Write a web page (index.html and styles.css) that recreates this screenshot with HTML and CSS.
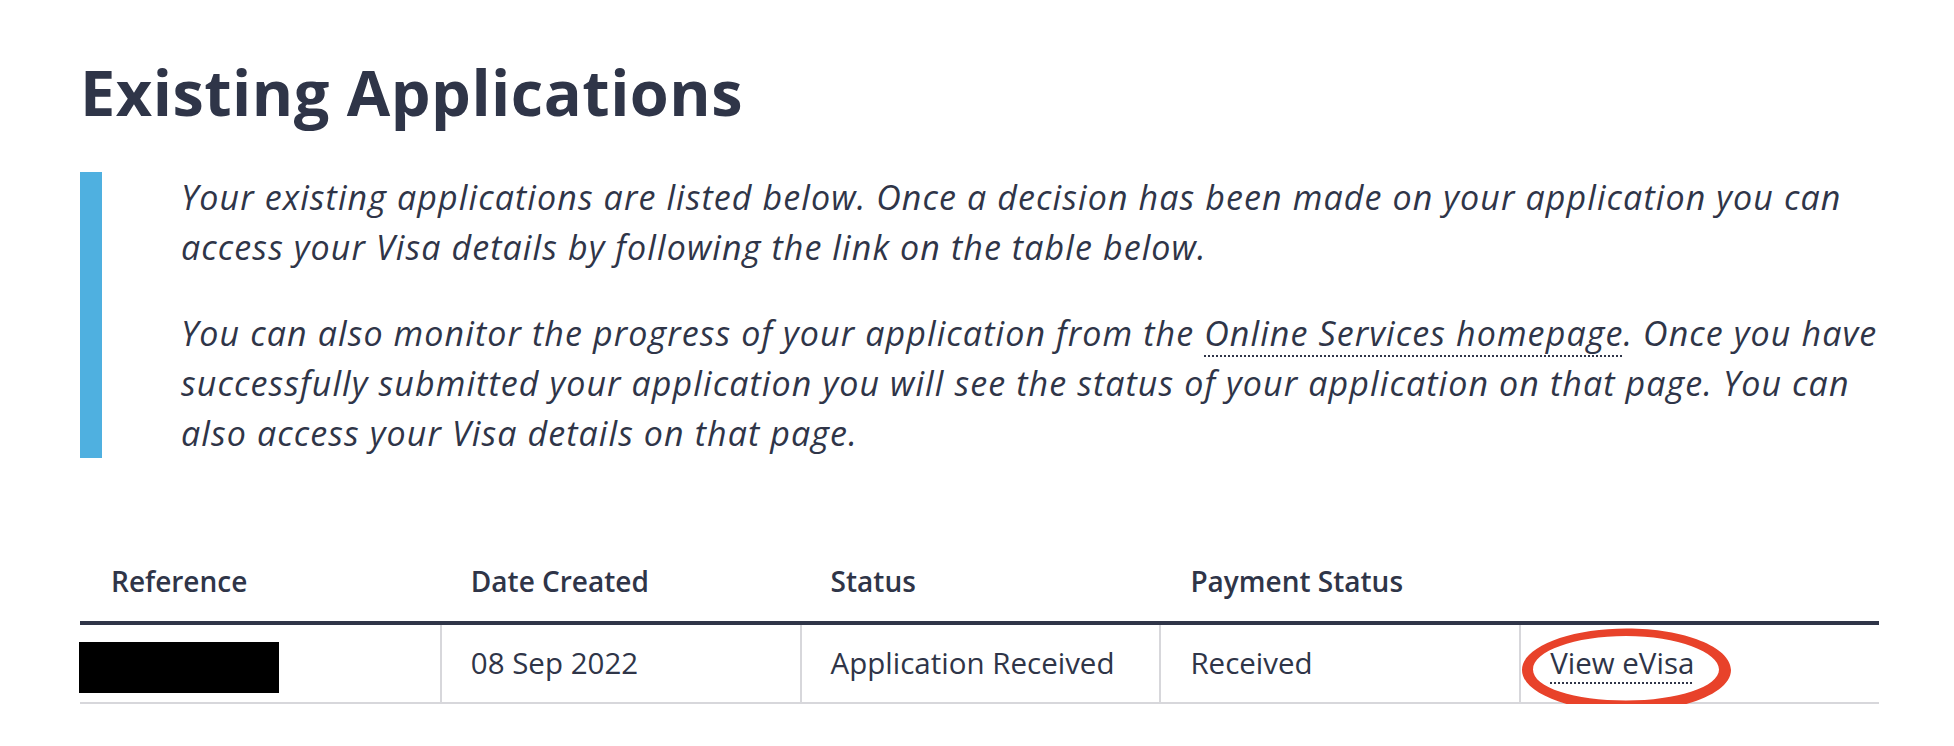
FILE: index.html
```html
<!DOCTYPE html>
<html lang="en">
<head>
<meta charset="utf-8">
<title>Existing Applications</title>
<link rel="stylesheet" href="styles.css">
</head>
<body>
<main class="page">
  <h1 class="title">Existing Applications</h1>
  <blockquote class="note">
    <p>Your existing applications are listed below. Once a decision has been made on your application you can access your Visa details by following the link on the table below.</p>
    <p>You can also monitor the progress of your application from the <a class="link" href="#">Online Services homepage</a>. Once you have successfully submitted your application you will see the status of your application on that page. You can also access your Visa details on that page.</p>
  </blockquote>
  <table class="apps">
    <thead>
      <tr>
        <th>Reference</th>
        <th>Date Created</th>
        <th>Status</th>
        <th>Payment Status</th>
        <th></th>
      </tr>
    </thead>
    <tbody>
      <tr>
        <td class="ref"><span class="redact"></span>&nbsp;</td>
        <td>08 Sep 2022</td>
        <td>Application Received</td>
        <td>Received</td>
        <td class="action">
          <a class="link" href="#">View eVisa</a>
          <svg class="circle" width="212" height="88" viewBox="0 0 212 88" aria-hidden="true">
            <path fill="#e8422a" fill-rule="evenodd" d="M105.5 1.5C163.2 1.5 210 20.1 210 43S163.2 84.5 105.5 84.5 1 65.9 1 43 47.8 1.5 105.5 1.5ZM105 9C53.6 9 12 24.2 12 42.5S53.6 73.5 105 73.5 198 59.9 198 42.5 156.4 9 105 9Z"/>
          </svg>
        </td>
      </tr>
    </tbody>
  </table>
</main>
</body>
</html>
```

FILE: styles.css
```css
html, body {
  margin: 0;
  padding: 0;
  background: #ffffff;
}

body {
  font-family: "Open Sans", "Noto Sans", sans-serif;
  color: #2f3548;
}

.page {
  margin-left: 80px;
  width: 1799px;
  padding-top: 54px;
}

.title {
  margin: 0;
  font-size: 63px;
  line-height: 75px;
  font-weight: 700;
  letter-spacing: 0.5px;
  color: #2f3548;
}

.note {
  margin: 43px -21px 0 0;
  border-left: 22px solid #4fb0e0;
  padding-left: 79px;
}

.note p {
  margin: 0;
  font-size: 34px;
  line-height: 50px;
  font-style: italic;
  letter-spacing: 1.1px;
}

.note p + p {
  margin-top: 36px;
}

.link {
  color: inherit;
  text-decoration: underline dotted;
  text-decoration-thickness: 2px;
  text-underline-offset: 9px;
}

.apps {
  margin-top: 83px;
  width: 1799px;
  table-layout: fixed;
  border-collapse: separate;
  border-spacing: 0;
}

.apps th {
  text-align: left;
  font-size: 28px;
  line-height: 45px;
  font-weight: 600;
  padding: 18px 10px 17px 31px;
  border-bottom: 4px solid #2f3548;
}

.apps td {
  font-size: 29.5px;
  line-height: 45px;
  padding: 15px 10px 17px 29px;
  border-bottom: 2px solid #d7d7db;
  white-space: nowrap;
}

.apps td + td {
  border-left: 2px solid #d7d7db;
}

.apps td.ref {
  position: relative;
}

.redact {
  position: absolute;
  left: -1px;
  top: 17px;
  width: 200px;
  height: 51px;
  background: #000000;
}

.apps td.action {
  position: relative;
}

.action .link {
  text-underline-offset: 8px;
}

.circle {
  position: absolute;
  left: 0;
  top: 2px;
}
```
